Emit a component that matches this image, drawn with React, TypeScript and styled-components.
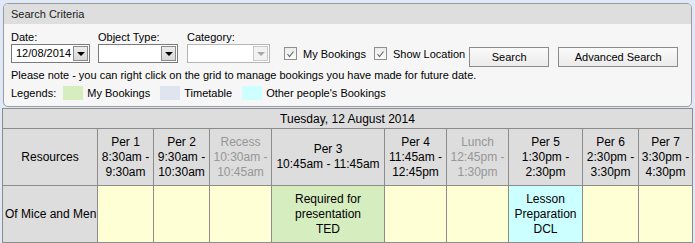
import React from "react";
import styled, { createGlobalStyle } from "styled-components";

const Global = createGlobalStyle`
  html, body { margin: 0; padding: 0; background: #dfe8f6; }
  body { font-family: "Liberation Sans", Arial, sans-serif; color: #000; }
`;

const Page = styled.div`
  width: 695px;
  height: 243px;
  padding: 3px 2px 0 2px;
  box-sizing: border-box;
  overflow: hidden;
`;

const Panel = styled.section`
  margin: 0 1px;
  height: 104px;
  box-sizing: border-box;
  border: 1px solid #9c9c9c;
  border-radius: 5px;
  background: #f6f6f6;
  overflow: hidden;
  font-size: 11px;
`;

const PanelHeader = styled.div`
  height: 20px;
  line-height: 20px;
  padding-left: 7px;
  background: #dedede;
  color: #1a1a1a;
`;

const PanelBody = styled.div`
  padding: 7px 7px 0 7px;
  display: flex;
  flex-direction: column;
`;

const ControlsRow = styled.div`
  display: flex;
  align-items: flex-start;
  height: 35px;
`;

const Field = styled.div<{ $w: number; $mr: number }>`
  width: ${(p) => p.$w}px;
  margin-right: ${(p) => p.$mr}px;
  display: flex;
  flex-direction: column;
`;

const Label = styled.div`
  height: 13px;
  line-height: 13px;
`;

const Combo = styled.div<{ $disabled?: boolean }>`
  height: 19px;
  box-sizing: border-box;
  border: 1px solid ${(p) => (p.$disabled ? "#b5b5b5" : "#7a7a7a")};
  background: #fff;
  display: flex;
  align-items: center;
  padding: 0 1px 0 4px;
  font-size: 11px;
`;

const ComboText = styled.span`
  flex: 1;
  line-height: 15px;
`;

const ComboButton = styled.span<{ $disabled?: boolean }>`
  width: 15px;
  height: 15px;
  box-sizing: border-box;
  border: 1px solid ${(p) => (p.$disabled ? "#c8c8c8" : "#8a8a8a")};
  background: ${(p) => (p.$disabled ? "#f2f2f2" : "linear-gradient(#ececec, #d8d8d8)")};
  display: flex;
  align-items: center;
  justify-content: center;
`;

const Arrow = styled.span<{ $disabled?: boolean }>`
  width: 0;
  height: 0;
  border-left: 4px solid transparent;
  border-right: 4px solid transparent;
  border-top: 4px solid ${(p) => (p.$disabled ? "#a8a8a8" : "#000")};
`;

const CheckGroup = styled.label<{ $ml: number }>`
  margin-left: ${(p) => p.$ml}px;
  margin-top: 15px;
  display: flex;
  align-items: center;
  height: 15px;
`;

const CheckBox = styled.span`
  width: 13px;
  height: 13px;
  box-sizing: border-box;
  border: 1px solid #8e8f8f;
  background: linear-gradient(#ececec, #fbfbfb);
  display: flex;
  align-items: center;
  justify-content: center;
  margin-right: 6px;
`;

const Button = styled.button<{ $w: number; $ml: number }>`
  margin-left: ${(p) => p.$ml}px;
  margin-top: 16px;
  width: ${(p) => p.$w}px;
  height: 20px;
  box-sizing: border-box;
  border: 1px solid #8b8b8b;
  border-radius: 0;
  background: linear-gradient(#fafafa, #ebebeb);
  font-family: "Liberation Sans", Arial, sans-serif;
  font-size: 11px;
  color: #000;
  padding: 0;
`;

const Note = styled.div`
  margin-top: 3px;
  height: 13px;
  line-height: 13px;
`;

const LegendRow = styled.div`
  margin-top: 4px;
  display: flex;
  align-items: center;
  height: 14px;
`;

const LegendLabel = styled.span<{ $mr: number }>`
  margin-right: ${(p) => p.$mr}px;
`;

const Swatch = styled.span<{ $c: string }>`
  width: 20px;
  height: 14px;
  background: ${(p) => p.$c};
  margin-right: 4px;
`;

const Schedule = styled.div`
  margin-top: 1px;
  display: grid;
  grid-template-columns: 95px 56px 56px 62px 113px 62px 62px 74px 56px 54px;
  border-left: 1px solid #8c8c8c;
  border-top: 1px solid #8c8c8c;
  width: 691px;
  box-sizing: border-box;
  font-size: 12px;
`;

const Cell = styled.div<{ $bg: string; $muted?: boolean; $left?: boolean; $h: number }>`
  height: ${(p) => p.$h}px;
  box-sizing: border-box;
  border-right: 1px solid #8c8c8c;
  border-bottom: 1px solid #8c8c8c;
  background: ${(p) => p.$bg};
  color: ${(p) => (p.$muted ? "#969696" : "#000")};
  display: flex;
  flex-direction: column;
  justify-content: center;
  align-items: ${(p) => (p.$left ? "flex-start" : "center")};
  padding-left: ${(p) => (p.$left ? "2px" : "0")};
  text-align: center;
  line-height: 15px;
  white-space: nowrap;
`;

const TitleCell = styled.div`
  grid-column: 1 / -1;
  height: 20px;
  box-sizing: border-box;
  border-right: 1px solid #8c8c8c;
  border-bottom: 1px solid #8c8c8c;
  background: #dddddd;
  display: flex;
  align-items: center;
  justify-content: center;
`;

const Check = () => (
  <svg width="9" height="8" viewBox="0 0 9 8">
    <polyline points="1.5,4 3.5,6.5 7.5,1.5" fill="none" stroke="#6a6a6a" strokeWidth="1.2" />
  </svg>
);

const periods: { name: string; time: string[]; muted?: boolean }[] = [
  { name: "Per 1", time: ["8:30am -", "9:30am"] },
  { name: "Per 2", time: ["9:30am -", "10:30am"] },
  { name: "Recess", time: ["10:30am -", "10:45am"], muted: true },
  { name: "Per 3", time: ["10:45am - 11:45am"] },
  { name: "Per 4", time: ["11:45am -", "12:45pm"] },
  { name: "Lunch", time: ["12:45pm -", "1:30pm"], muted: true },
  { name: "Per 5", time: ["1:30pm -", "2:30pm"] },
  { name: "Per 6", time: ["2:30pm -", "3:30pm"] },
  { name: "Per 7", time: ["3:30pm -", "4:30pm"] },
];

const YELLOW = "#ffffd5";
const GREEN = "#d6edc0";
const CYAN = "#ccffff";
const GRAY = "#dddddd";

const bookings: { bg: string; lines: string[] }[] = [
  { bg: YELLOW, lines: [] },
  { bg: YELLOW, lines: [] },
  { bg: YELLOW, lines: [] },
  { bg: GREEN, lines: ["Required for", "presentation", "TED"] },
  { bg: YELLOW, lines: [] },
  { bg: YELLOW, lines: [] },
  { bg: CYAN, lines: ["Lesson", "Preparation", "DCL"] },
  { bg: YELLOW, lines: [] },
  { bg: YELLOW, lines: [] },
];

export default function App() {
  return (
    <Page>
      <Global />
      <Panel>
        <PanelHeader>Search Criteria</PanelHeader>
        <PanelBody>
          <ControlsRow>
            <Field $w={79} $mr={8}>
              <Label>Date:</Label>
              <Combo>
                <ComboText>12/08/2014</ComboText>
                <ComboButton>
                  <Arrow />
                </ComboButton>
              </Combo>
            </Field>
            <Field $w={80} $mr={9}>
              <Label>Object Type:</Label>
              <Combo>
                <ComboText />
                <ComboButton>
                  <Arrow />
                </ComboButton>
              </Combo>
            </Field>
            <Field $w={83} $mr={0}>
              <Label>Category:</Label>
              <Combo $disabled>
                <ComboText />
                <ComboButton $disabled>
                  <Arrow $disabled />
                </ComboButton>
              </Combo>
            </Field>
            <CheckGroup $ml={14}>
              <CheckBox>
                <Check />
              </CheckBox>
              My Bookings
            </CheckGroup>
            <CheckGroup $ml={8}>
              <CheckBox>
                <Check />
              </CheckBox>
              Show Location
            </CheckGroup>
            <Button $w={80} $ml={4}>Search</Button>
            <Button $w={120} $ml={9}>Advanced Search</Button>
          </ControlsRow>
          <Note>
            Please note - you can right click on the grid to manage bookings you have made for future date.
          </Note>
          <LegendRow>
            <LegendLabel $mr={7}>Legends:</LegendLabel>
            <Swatch $c="#d6edc0" />
            <LegendLabel $mr={10}>My Bookings</LegendLabel>
            <Swatch $c="#dee5ef" />
            <LegendLabel $mr={10}>Timetable</LegendLabel>
            <Swatch $c="#ccfffe" />
            <LegendLabel $mr={0}>Other people's Bookings</LegendLabel>
          </LegendRow>
        </PanelBody>
      </Panel>
      <Schedule>
        <TitleCell>Tuesday, 12 August 2014</TitleCell>
        <Cell $bg={GRAY} $h={57}>Resources</Cell>
        {periods.map((p) => (
          <Cell key={p.name} $bg={GRAY} $h={57} $muted={p.muted}>
            <span>{p.name}</span>
            {p.time.map((t) => (
              <span key={t}>{t}</span>
            ))}
          </Cell>
        ))}
        <Cell $bg={GRAY} $h={57} $left>Of Mice and Men</Cell>
        {bookings.map((b, i) => (
          <Cell key={i} $bg={b.bg} $h={57}>
            {b.lines.map((l) => (
              <span key={l}>{l}</span>
            ))}
          </Cell>
        ))}
      </Schedule>
    </Page>
  );
}
